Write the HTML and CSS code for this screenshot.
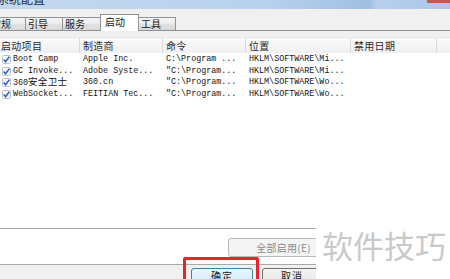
FILE: index.html
```html
<!DOCTYPE html>
<html lang="zh-CN">
<head>
<meta charset="utf-8">
<link rel="stylesheet" href="styles.css">
</head>
<body>
<div class="window">
  <div class="titlebar"><span class="title">系统配置</span><span class="close"></span></div>
  <div class="tabs">
    <div class="tab first">常规</div>
    <div class="tab">引导</div>
    <div class="tab w38">服务</div>
    <div class="tab active">启动</div>
    <div class="tab last">工具</div>
  </div>
  <div class="panel">
    <div class="list">
      <div class="row head">
        <div class="cell c1">启动项目</div>
        <div class="cell">制造商</div>
        <div class="cell">命令</div>
        <div class="cell">位置</div>
        <div class="cell">禁用日期</div>
        <div class="cell end"></div>
      </div>
      <div class="rows">
        <div class="row item">
          <div class="cell c1"><svg class="check" viewBox="0 0 9 9"><rect x="0.5" y="0.5" width="8" height="8" rx="1"/><path d="M1.8 4.6 L3.6 6.8 L7.4 1.6"/></svg><span class="txt">Boot Camp</span></div>
          <div class="cell">Apple Inc.</div>
          <div class="cell">C:\Program ...</div>
          <div class="cell">HKLM\SOFTWARE\Mi...</div>
          <div class="cell"></div>
          <div class="cell"></div>
        </div>
        <div class="row item">
          <div class="cell c1"><svg class="check" viewBox="0 0 9 9"><rect x="0.5" y="0.5" width="8" height="8" rx="1"/><path d="M1.8 4.6 L3.6 6.8 L7.4 1.6"/></svg><span class="txt">GC Invoke...</span></div>
          <div class="cell">Adobe Syste...</div>
          <div class="cell">"C:\Program...</div>
          <div class="cell">HKLM\SOFTWARE\Mi...</div>
          <div class="cell"></div>
          <div class="cell"></div>
        </div>
        <div class="row item">
          <div class="cell c1"><svg class="check" viewBox="0 0 9 9"><rect x="0.5" y="0.5" width="8" height="8" rx="1"/><path d="M1.8 4.6 L3.6 6.8 L7.4 1.6"/></svg><span class="txt">360<span class="cjk">安全卫士</span></span></div>
          <div class="cell">360.cn</div>
          <div class="cell">"C:\Program...</div>
          <div class="cell">HKLM\SOFTWARE\Wo...</div>
          <div class="cell"></div>
          <div class="cell"></div>
        </div>
        <div class="row item">
          <div class="cell c1"><svg class="check" viewBox="0 0 9 9"><rect x="0.5" y="0.5" width="8" height="8" rx="1"/><path d="M1.8 4.6 L3.6 6.8 L7.4 1.6"/></svg><span class="txt">WebSocket...</span></div>
          <div class="cell">FEITIAN Tec...</div>
          <div class="cell">"C:\Program...</div>
          <div class="cell">HKLM\SOFTWARE\Wo...</div>
          <div class="cell"></div>
          <div class="cell"></div>
        </div>
      </div>
    </div>
    <div class="actions"><button class="btn disabled">全部启用(E)</button></div>
  </div>
  <div class="footer">
    <button class="btn default ok">确定</button>
    <button class="btn cancel">取消</button>
  </div>
  <div class="highlight"></div>
  <div class="watermark">软件技巧</div>
</div>
</body>
</html>
```

FILE: styles.css
```css
* { box-sizing: border-box; }
html, body { margin: 0; padding: 0; }
body {
  font-family: "Noto Sans CJK SC", "Noto Sans", sans-serif;
  background: #f0f0f0;
}
.window {
  position: relative;
  width: 450px;
  height: 279px;
  overflow: hidden;
  background: #f0f0f0;
}
.titlebar {
  height: 9px;
  display: flex;
  justify-content: space-between;
  align-items: flex-start;
  overflow: hidden;
  background: linear-gradient(to right, #c3d8ef 0%, #b7d1ee 60%, #9fbfe2 82%, #b6d0ec 84%, #a9c7e8 100%);
}
.title {
  font-size: 12px;
  line-height: 12px;
  margin-top: -7px;
  margin-left: -3px;
  color: #1b2a3a;
}
.close {
  width: 23px;
  height: 3px;
  background: #c45a48;
}
.tabs {
  height: 22px;
  display: flex;
  align-items: flex-end;
  margin-left: -12px;
  border-bottom: 1px solid #8d9197;
}
.tab {
  width: 37px;
  height: 13px;
  padding-left: 2px;
  font-size: 10px;
  line-height: 12px;
  color: #1a1a1a;
  border: 1px solid #8f939a;
  border-right: none;
  border-bottom: none;
  background: linear-gradient(#f4f4f4, #ebebeb 50%, #e1e1e1 51%, #d9d9d9);
  white-space: nowrap;
}
.tab.w38 { width: 38px; }
.tab.active {
  width: 39px;
  height: 17px;
  margin-bottom: -1px;
  padding-left: 4px;
  padding-top: 1px;
  background: #ffffff;
  border-right: 1px solid #8f939a;
  position: relative;
}
.tab.last {
  width: 37px;
  border-left: none;
  border-right: 1px solid #8f939a;
}
.panel {
  height: 228px;
  background: #ffffff;
  border-bottom: 1px solid #a9a9a9;
}
.list {
  margin-top: 6px;
  height: 192px;
  border-bottom: 1px solid #a9a9a9;
}
.row {
  display: grid;
  grid-template-columns: 80px 83px 83px 105px 86px 1fr;
}
.head {
  height: 16px;
  background: linear-gradient(#fbfbfb, #eff0f2);
  border-top: 1px solid #e6e6e6;
}
.head .cell {
  font-size: 10px;
  line-height: 15px;
  color: #2a2a2a;
  padding-left: 3px;
  border-right: 1px solid #d9dadc;
  letter-spacing: 0.3px;
  white-space: nowrap;
  overflow: hidden;
}
.head .cell.c1 { padding-left: 1px; }
.head .cell.end { border-right: none; }
.rows { padding-top: 1px; }
.item { height: 11.5px; }
.item .cell {
  font-family: "Liberation Mono", "Noto Sans CJK SC", monospace;
  font-size: 8.4px;
  line-height: 11.5px;
  height: 11.5px;
  color: #141414;
  padding-left: 3px;
  white-space: nowrap;
  overflow: hidden;
  display: flex;
  align-items: center;
}
.item .cell.c1 { padding-left: 2px; overflow: visible; }
.txt { line-height: 11.5px; }
.cjk {
  font-family: "Noto Sans CJK SC", sans-serif;
  font-size: 9.6px;
  line-height: 1;
  letter-spacing: 0.2px;
}
.check {
  width: 9px;
  height: 9px;
  margin-right: 2px;
  flex: none;
}
.check rect { fill: #f7f9fc; stroke: #b9c0cc; stroke-width: 1; }
.check path { fill: none; stroke: #2d5fbf; stroke-width: 1.6; }
.actions {
  height: 29px;
  padding-top: 4px;
  padding-left: 228px;
}
.btn {
  font-family: "Noto Sans CJK SC", sans-serif;
  font-size: 10px;
  padding: 0;
  margin: 0;
  border-radius: 3px;
  border: 1px solid #707070;
  background: linear-gradient(#f2f2f2, #ebebeb 50%, #dddddd 51%, #cfcfcf);
  color: #1a1a1a;
}
.btn.disabled {
  width: 111px;
  height: 19px;
  color: #8a8a8a;
  border-color: #b5b9bd;
  background: #f4f4f4;
  letter-spacing: 0.3px;
}
.footer {
  height: 20px;
  display: flex;
  align-items: flex-start;
  gap: 9px;
  padding-left: 191px;
  padding-top: 3px;
}
.btn.ok, .btn.cancel {
  height: 22px;
  padding: 0 0 7px 0;
  line-height: 13px;
  letter-spacing: 1px;
  flex: none;
}
.btn.ok {
  width: 62px;
  border-color: #3c7fb1;
  background: linear-gradient(#eaf6fd, #d9f0fc 50%, #bee6fd 51%, #a7d9f5);
}
.btn.cancel { width: 60px; }
.highlight {
  position: absolute;
  left: 183px;
  top: 257px;
  width: 76px;
  height: 28px;
  border: 3px solid #e3262b;
  border-radius: 2px;
}
.watermark {
  position: absolute;
  left: 316px;
  top: 215px;
  right: 0;
  bottom: 0;
  background: #ffffff;
  color: #c9c9c9;
  font-family: "Noto Sans CJK SC", sans-serif;
  font-size: 31px;
  line-height: 31px;
  padding-left: 6px;
  padding-top: 14px;
  white-space: nowrap;
}
```
